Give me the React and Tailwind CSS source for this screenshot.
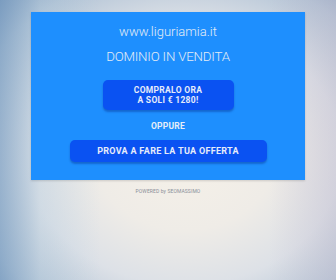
import React from 'react';

const App = () => {
  return (
    <div className="relative w-[336px] h-[280px] overflow-hidden bg-[radial-gradient(ellipse_at_55%_55%,#f6f1e8_0%,#efece7_35%,#dde1e7_60%,#b3c4d6_85%,#8aa4c2_100%)] font-['Roboto',sans-serif]">
      {/* side tints */}
      <div className="absolute inset-0 bg-[linear-gradient(90deg,rgba(110,150,190,0.55)_0%,rgba(170,200,220,0.25)_12%,rgba(255,255,255,0)_30%,rgba(255,255,255,0)_80%,rgba(190,180,200,0.35)_100%)]" />
      <div className="relative flex flex-col items-center pt-[12px]">
        <div className="w-[274px] h-[168px] bg-[#1e8ffe] flex flex-col items-center shadow-[0_1px_2px_rgba(0,0,0,0.15)]">
          <div className="mt-[12px] text-[13px] leading-[16px] font-light text-[#e3ecf5]">www.liguriamia.it</div>
          <div className="mt-[9px] text-[13.3px] leading-[16px] font-light text-[#e3ecf5] tracking-[-0.2px]">DOMINIO IN VENDITA</div>
          <button className="mt-[15px] w-[131px] h-[30px] rounded-[5px] bg-[#0a52f2] shadow-[0_2px_2px_rgba(0,30,120,0.35)] flex flex-col items-center justify-center text-[#e6ecfa] font-bold text-[8.5px] leading-[10px] tracking-[0.3px]">
            <span>COMPRALO ORA</span>
            <span>A SOLI € 1280!</span>
          </button>
          <div className="mt-[11px] text-[8.5px] leading-[10px] font-bold text-[#e6eef8] tracking-[0.2px]">OPPURE</div>
          <button className="mt-[9px] w-[197px] h-[22px] rounded-[5px] bg-[#0a52f2] shadow-[0_2px_2px_rgba(0,30,120,0.35)] flex items-center justify-center text-[#e6ecfa] font-bold text-[9px] leading-[10px] tracking-[0.3px]">
            PROVA A FARE LA TUA OFFERTA
          </button>
        </div>
        <div className="mt-[7px] text-[5px] leading-[8px] text-[#8a8f99] tracking-[0.1px]">
          POWERED by SEOMASSIMO
        </div>
      </div>
    </div>
  );
};

export default App;
